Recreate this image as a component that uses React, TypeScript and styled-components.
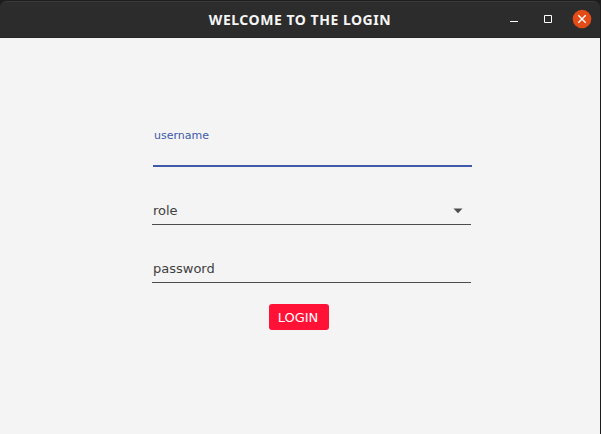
import React from "react";
import styled, { createGlobalStyle } from "styled-components";

const GlobalStyle = createGlobalStyle`
  * { box-sizing: border-box; }
  body { margin: 0; background: #1d1d1d; overflow: hidden; }
`;

const Window = styled.div`
  width: 601px;
  height: 434px;
  display: flex;
  flex-direction: column;
  padding-top: 1px;
  padding-right: 1px;
  background: #1d1d1d;
  font-family: "DejaVu Sans", sans-serif;
`;

const TitleBar = styled.header`
  height: 37px;
  flex: none;
  display: grid;
  grid-template-columns: 1fr auto 1fr;
  align-items: center;
  background: #2c2c2c;
  border-top: 1px solid #3b3b3b;
  border-bottom: 1px solid #242424;
  border-radius: 7px 7px 0 0;
`;

const Title = styled.h1`
  grid-column: 2;
  margin: 0;
  font: 700 14px/20px "Noto Sans", sans-serif;
  letter-spacing: 0.53px;
  white-space: nowrap;
  color: #f5f5f5;
`;

const Controls = styled.div`
  display: flex;
  justify-content: flex-end;
  gap: 14px;
  padding: 0 8px 2px 0;
`;

const Control = styled.button`
  width: 20px;
  height: 20px;
  padding: 0;
  border: 0;
  background: none;
  display: flex;

  svg { display: block; overflow: visible; }
`;

const Content = styled.main`
  flex: 1;
  background: #f4f4f4;
  display: flex;
  flex-direction: column;
  padding: 88px 128px 0 152px;
`;

const Field = styled.div<{ $active?: boolean }>`
  width: 319px;
  height: ${(p) => (p.$active ? 41 : 58)}px;
  margin-left: ${(p) => (p.$active ? 1 : 0)}px;
  padding: 0 8px ${(p) => (p.$active ? 21 : 5)}px 1px;
  display: flex;
  justify-content: space-between;
  align-items: flex-end;
  border-bottom: ${(p) => (p.$active ? "2px solid #4059a9" : "1px solid #4d4d4d")};
  color: ${(p) => (p.$active ? "#4059a9" : "#404040")};
  font-size: ${(p) => (p.$active ? 11 : 13)}px;
  line-height: 17px;
`;

const Arrow = styled.svg`
  width: 10px;
  height: 6px;
  margin-bottom: 5px;
`;

const LoginButton = styled.button`
  width: 60px;
  height: 26px;
  margin: 21px 0 0 117px;
  padding: 1px 2px 0 0;
  border: 0;
  border-radius: 3px;
  background: #ff1236;
  color: #fff;
  font: 13px/25px "DejaVu Sans", sans-serif;
`;

export default function App() {
  return (
    <>
      <GlobalStyle />
      <Window>
        <TitleBar>
          <Title>WELCOME TO THE LOGIN</Title>
          <Controls>
            <Control aria-label="Minimize">
              <svg width="20" height="20"><path d="M6 12.5h8" stroke="#fff" /></svg>
            </Control>
            <Control aria-label="Maximize">
              <svg width="20" height="20"><path d="M6.5 6.5h7v7h-7z" fill="none" stroke="#fff" /></svg>
            </Control>
            <Control aria-label="Close">
              <svg width="20" height="20">
                <circle cx="10" cy="10" r="9.3" fill="#e34b17" />
                <path d="M6.3 6.3l7.4 7.4M13.7 6.3l-7.4 7.4" stroke="#fff" strokeWidth="1.4" />
              </svg>
            </Control>
          </Controls>
        </TitleBar>
        <Content>
          <Field $active>username</Field>
          <Field>
            role
            <Arrow viewBox="0 0 10 6"><path d="M.5.5h9L5 5.3z" fill="#4d4d4d" /></Arrow>
          </Field>
          <Field>password</Field>
          <LoginButton>LOGIN</LoginButton>
        </Content>
      </Window>
    </>
  );
}
